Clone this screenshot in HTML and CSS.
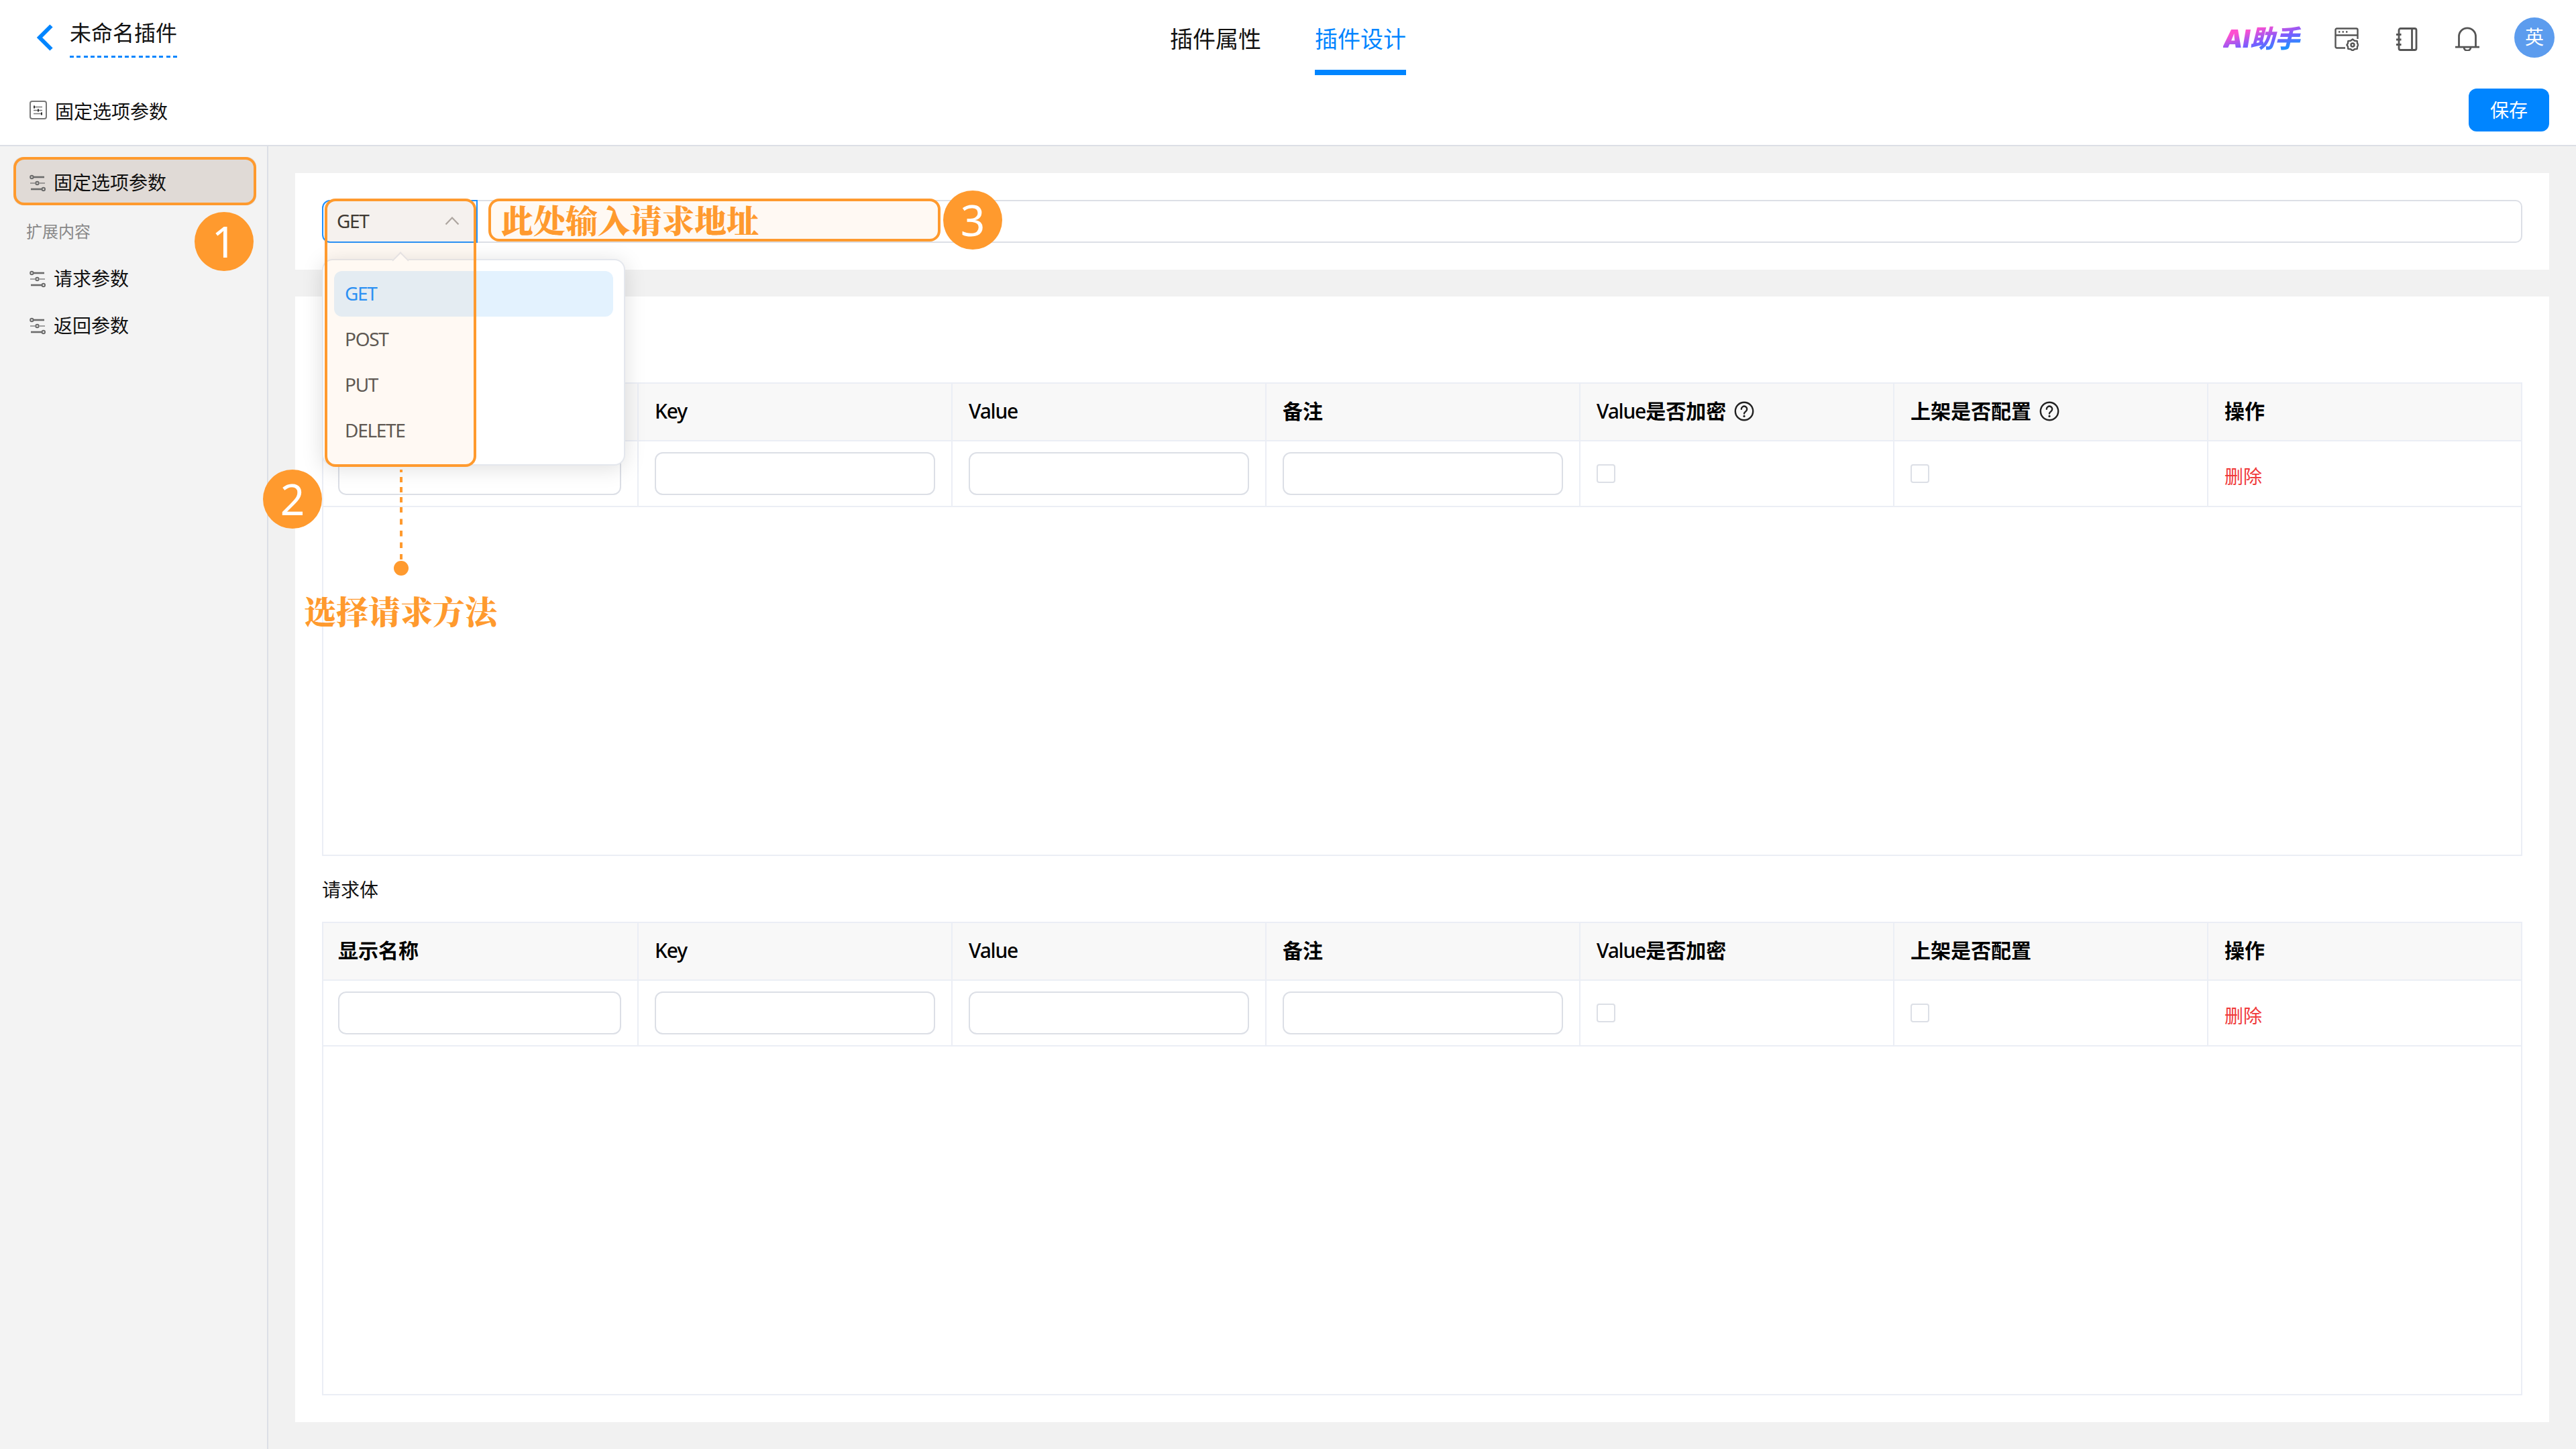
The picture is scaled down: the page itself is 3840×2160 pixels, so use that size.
FILE: index.html
```
<!DOCTYPE html>
<html lang="zh-CN">
<head>
  <meta charset="UTF-8">
  <title>插件设计</title>
  <link rel="stylesheet" href="styles.css">
</head>
<body>
  <svg class="symbols">
    <symbol id="icon-params" viewBox="0 0 24 26">
      <g fill="none" stroke="currentColor" stroke-width="2">
        <path d="M6 4H22" stroke-width="2.600"/>
        <path d="M1 13H8M15 13H23" opacity=".6"/>
        <path d="M2 22H18" stroke-width="2.600"/>
        <circle cx="3.400" cy="4" r="2.200"/>
        <circle cx="11.500" cy="13" r="2.200"/>
        <circle cx="20.800" cy="22" r="2.200"/>
      </g>
    </symbol>
    <symbol id="icon-help" viewBox="0 0 30 30">
      <g fill="none" stroke="currentColor" stroke-width="2.4" stroke-linecap="round">
        <circle cx="15" cy="15" r="13.2"/>
        <path d="M10.8 11.8a4.2 4.2 0 1 1 6.4 3.6c-1.6 1-2.2 1.6-2.2 3.2"/>
      </g>
      <circle cx="15" cy="22.4" r="1.6" fill="currentColor"/>
    </symbol>
  </svg>

  <header class="header">
    <div class="top-bar">
      <div class="title-area">
        <svg class="back" viewBox="0 0 24 40"><path d="M21.5 2.5L4 20L21.5 37.5" fill="none" stroke="#0085ff" stroke-width="6"/></svg>
        <span class="plugin-name">未命名插件</span>
      </div>
      <nav class="tabs">
        <a class="tab">插件属性</a>
        <a class="tab active">插件设计</a>
      </nav>
      <div class="tools">
        <span class="ai">AI助手</span>
        <svg class="tool-icon" viewBox="0 0 36 36" fill="none" stroke="#555" stroke-width="2.4">
          <path d="M16 31.500H3.500a2 2 0 0 1-2-2V4.500a2 2 0 0 1 2-2H32.500a2 2 0 0 1 2 2V18M1.500 12.500H34.500"/>
          <path d="M6 7.500h2.400M11.500 7.500h2.400M17 7.500h2.400"/>
          <path d="M27 18.500l3 2.200 3.700.4.400 3.700L35.600 27l-1.500 2.200-.4 3.700-3.700.4-3 2.200-3-2.200-3.700-.4-.4-3.700L18.400 27l1.500-2.200.4-3.700 3.700-.4z" stroke-linejoin="round"/>
          <circle cx="27" cy="27" r="2.500"/>
        </svg>
        <svg class="tool-icon" viewBox="0 0 36 36" fill="none" stroke="#555" stroke-width="2.800">
          <rect x="6" y="2.500" width="26" height="32" rx="2.500"/>
          <path d="M25.500 2.500V34.500M2 11.500H9.500M2 19H9.500M2 26.500H9.500"/>
        </svg>
        <svg class="tool-icon" viewBox="0 0 36 36" fill="none" stroke="#555" stroke-width="2.800">
          <path d="M5.500 30V14.300a12.500 12.500 0 0 1 25 0V30M0 30.200H36M13 30.500a5 5 0 0 0 10 0"/>
        </svg>
        <span class="avatar">英</span>
      </div>
    </div>
    <div class="sub-bar">
      <svg class="sub-icon" viewBox="0 0 26 28" fill="none" stroke="#777" stroke-width="2">
        <rect x="1" y="1" width="24" height="26" rx="3"/>
        <path d="M6 9.500H19M6 14.500H19M6 19.500H19" stroke-width="1.500"/>
        <path d="M7 7.500v4M13 12.500v4M18 17.500v4" stroke="#333"/>
      </svg>
      <span class="sub-name">固定选项参数</span>
      <button class="save">保存</button>
    </div>
  </header>

  <div class="body">
    <aside class="sidebar">
      <div class="menu-item active"><svg><use href="#icon-params"/></svg>固定选项参数</div>
      <div class="menu-title">扩展内容</div>
      <div class="menu-item"><svg><use href="#icon-params"/></svg>请求参数</div>
      <div class="menu-item"><svg><use href="#icon-params"/></svg>返回参数</div>
    </aside>

    <main class="main">
      <section class="panel request">
        <div class="select">
          <span class="latin">GET</span>
          <svg viewBox="0 0 22 14"><path d="M1.500 12.500L11 2.500L20.500 12.500" fill="none" stroke="#a8a6a6" stroke-width="2.200"/></svg>
        </div>
        <div class="url"></div>
      </section>

      <section class="panel params">
        <div class="table">
          <div class="row head">
            <div class="cell"></div>
            <div class="cell"><span class="latin">Key</span></div>
            <div class="cell"><span class="latin">Value</span></div>
            <div class="cell">备注</div>
            <div class="cell"><span class="latin">Value</span>是否加密<svg class="help"><use href="#icon-help"/></svg></div>
            <div class="cell">上架是否配置<svg class="help"><use href="#icon-help"/></svg></div>
            <div class="cell">操作</div>
          </div>
          <div class="row">
            <div class="cell"><div class="field"></div></div>
            <div class="cell"><div class="field"></div></div>
            <div class="cell"><div class="field"></div></div>
            <div class="cell"><div class="field"></div></div>
            <div class="cell"><i class="check"></i></div>
            <div class="cell"><i class="check"></i></div>
            <div class="cell"><a class="delete">删除</a></div>
          </div>
        </div>

        <h3 class="section-title">请求体</h3>

        <div class="table">
          <div class="row head">
            <div class="cell">显示名称</div>
            <div class="cell"><span class="latin">Key</span></div>
            <div class="cell"><span class="latin">Value</span></div>
            <div class="cell">备注</div>
            <div class="cell"><span class="latin">Value</span>是否加密</div>
            <div class="cell">上架是否配置</div>
            <div class="cell">操作</div>
          </div>
          <div class="row">
            <div class="cell"><div class="field"></div></div>
            <div class="cell"><div class="field"></div></div>
            <div class="cell"><div class="field"></div></div>
            <div class="cell"><div class="field"></div></div>
            <div class="cell"><i class="check"></i></div>
            <div class="cell"><i class="check"></i></div>
            <div class="cell"><a class="delete">删除</a></div>
          </div>
        </div>
      </section>
    </main>
  </div>

  <!-- 请求方法下拉 -->
  <ul class="dropdown">
    <li class="selected">GET</li>
    <li>POST</li>
    <li>PUT</li>
    <li>DELETE</li>
  </ul>

  <!-- 操作步骤标注 -->
  <div class="mark mark-menu"></div>
  <div class="mark mark-method"></div>
  <div class="mark mark-url">此处输入请求地址</div>
  <span class="step step-1">1</span>
  <span class="step step-2">2</span>
  <span class="step step-3">3</span>
  <svg class="leader" viewBox="0 0 24 160" stroke="#ff9a2e" stroke-width="4">
    <path d="M12 0V4"/>
    <path d="M12 11V65" stroke-dasharray="8 7"/>
    <path d="M12 73.500V134" stroke-dasharray="8.500 9"/>
    <circle cx="12" cy="147" r="11" fill="#ff9a2e" stroke="none"/>
  </svg>
  <div class="note">选择请求方法</div>
</body>
</html>
```
FILE: styles.css
```
* {
  box-sizing: border-box;
}

body {
  margin: 0;
  width: 3840px;
  height: 2160px;
  position: relative;
  overflow: hidden;
  display: flex;
  flex-direction: column;
  background: #f1f1f1;
  color: #111;
  font-family: "Noto Sans", "Noto Sans CJK SC", sans-serif;
  font-size: 28px;
  line-height: 1;
}

.symbols {
  display: none;
}

.latin {
  letter-spacing: -1.4px;
}

/* 顶部 */
.header {
  height: 218px;
  background: #fff;
  border-bottom: 2px solid #dcdfe6;
}

.top-bar {
  height: 116px;
  display: grid;
  grid-template-columns: 1fr auto 1fr;
}

.title-area {
  display: flex;
  align-items: flex-start;
  padding-left: 55px;
}

.back {
  width: 24px;
  height: 40px;
  margin: 36px 25px 0 0;
}

.plugin-name {
  height: 64px;
  margin-top: 22px;
  font-size: 32px;
  line-height: 53px;
  background: repeating-linear-gradient(90deg, #0085ff 0 6px, transparent 6px 10.267px) left bottom / 100% 3px no-repeat;
}

.tabs {
  display: flex;
  gap: 80px;
  height: 112px;
}

.tab {
  font-size: 34px;
  line-height: 116px;
  height: 112px;
}

.tab.active {
  color: #0085ff;
  border-bottom: 8px solid #0085ff;
}

.tools {
  display: flex;
  justify-content: flex-end;
  align-items: center;
  padding-right: 32px;
  height: 116px;
}

.ai {
  margin-right: 48px;
  padding-right: 4px;
  font-family: Inter, "Noto Sans CJK SC", sans-serif;
  font-size: 37px;
  font-weight: 900;
  font-style: italic;
  line-height: 44px;
  background: linear-gradient(165deg, #ff4fd0 25%, #7a5cff 55%, #1e90ff 80%);
  -webkit-background-clip: text;
  color: transparent;
}

.tool-icon {
  width: 36px;
  height: 36px;
  margin-right: 54px;
}

.tool-icon:nth-of-type(3) {
  margin-right: 52px;
}

.avatar {
  width: 60px;
  height: 60px;
  margin-top: -4px;
  border-radius: 50%;
  background: #5c9cee;
  color: #fff;
  line-height: 58px;
  text-align: center;
}

.sub-bar {
  height: 100px;
  display: flex;
  align-items: center;
  padding: 0 40px 4px 44px;
}

.sub-icon {
  width: 26px;
  height: 28px;
  margin-right: 12px;
}

.sub-name {
  padding-top: 3px;
}

.save {
  margin-left: auto;
  width: 120px;
  height: 64px;
  border: none;
  border-radius: 12px;
  background: #0085ff;
  color: #fff;
  font: inherit;
}

/* 左侧菜单 */
.body {
  flex: 1;
  display: flex;
}

.sidebar {
  width: 400px;
  padding-top: 16px;
  background: #f3f3f3;
  border-right: 2px solid #dcdfe6;
}

.menu-item {
  height: 70px;
  margin: 0 18px 0 20px;
  padding-left: 24px;
  display: flex;
  align-items: center;
}

.menu-item svg {
  width: 24px;
  height: 26px;
  margin: 2px 12px 0 0;
  color: #6b6b6b;
}

.menu-item.active {
  height: 72px;
  margin-right: 16px;
  padding-top: 3px;
  border-radius: 14px;
  background: #e0dad6;
}

.menu-title {
  padding-left: 39px;
  font-size: 24px;
  height: 74px;
  line-height: 77px;
  color: #888;
}

/* 内容区 */
.main {
  flex: 1;
  display: flex;
  flex-direction: column;
  gap: 40px;
  padding: 40px;
}

.panel {
  background: #fff;
  padding: 40px;
}

.request {
  height: 144px;
  display: flex;
}

.select {
  width: 232px;
  height: 64px;
  padding: 0 25px 2px 20px;
  border: 2px solid #1e90ff;
  border-radius: 12px 0 0 12px;
  background: #f5f7fa;
  color: #333;
  display: flex;
  align-items: center;
  justify-content: space-between;
}

.select svg {
  width: 22px;
  height: 14px;
}

.url {
  flex: 1;
  border: 2px solid #dcdfe6;
  border-left: none;
  border-radius: 0 10px 10px 0;
}

.params {
  height: 1678px;
  padding-top: 128px;
}

.table {
  height: 706px;
  border: 2px solid #ebeef5;
}

.row {
  display: grid;
  grid-template-columns: 470px repeat(5, 468px) 466px;
  height: 98px;
  border-bottom: 2px solid #ebeef5;
}

.cell {
  display: flex;
  align-items: center;
  padding: 0 24px;
  border-right: 2px solid #ebeef5;
}

.cell:first-child {
  padding-left: 22px;
}

.cell:last-child {
  border-right: none;
}

.head {
  height: 86px;
  background: #f8f8f8;
  color: #000;
  font-size: 30px;
  font-weight: 600;
}

.head .cell {
  padding-bottom: 2px;
}

.head .latin {
  font-weight: 500;
  letter-spacing: -1.2px;
}

.help {
  width: 30px;
  height: 30px;
  margin-left: 12px;
  color: #222;
}

.field {
  flex: 1;
  height: 64px;
  border: 2px solid #dcdfe6;
  border-radius: 12px;
}

.check {
  width: 28px;
  height: 28px;
  border: 2px solid #dcdfe6;
  border-radius: 4px;
}

.delete {
  color: #f03a3a;
  padding-top: 7px;
}

.section-title {
  height: 98px;
  margin: 0;
  font-size: 28px;
  font-weight: 400;
  line-height: 100px;
}

/* 下拉菜单 */
.dropdown {
  position: absolute;
  left: 480px;
  top: 386px;
  width: 452px;
  margin: 0;
  padding: 16px;
  list-style: none;
  background: #fff;
  border: 2px solid #e4e7ed;
  border-radius: 16px;
  box-shadow: 0 4px 32px rgba(0, 0, 0, 0.13);
  color: #555;
}

.dropdown::before {
  content: "";
  position: absolute;
  left: 106px;
  top: -9px;
  width: 16px;
  height: 16px;
  background: #fff;
  border: 2px solid #e4e7ed;
  border-right: none;
  border-bottom: none;
  transform: rotate(45deg);
}

.dropdown li {
  height: 68px;
  padding-left: 16px;
  border-radius: 12px;
  line-height: 66px;
  letter-spacing: -1.3px;
}

.dropdown .selected {
  background: #e3f2fe;
  color: #1e90ff;
}

/* 标注 */
.mark {
  position: absolute;
  border: 4px solid #ff9a2e;
  border-radius: 16px;
  background: rgba(255, 154, 46, 0.06);
}

.mark-menu {
  left: 20px;
  top: 234px;
  width: 362px;
  height: 72px;
  background: none;
}

.mark-method {
  left: 484px;
  top: 296px;
  width: 226px;
  height: 400px;
}

.mark-url {
  left: 728px;
  top: 296px;
  width: 674px;
  height: 64px;
  padding-left: 15px;
  line-height: 54px;
}

.mark-url,
.note {
  font-family: "Noto Serif CJK SC", "Source Han Serif SC", "Noto Sans CJK SC", serif;
  font-size: 48px;
  font-weight: 900;
  color: #ff9a2e;
  white-space: nowrap;
}

.note {
  position: absolute;
  left: 453px;
  top: 885px;
  line-height: 50px;
}

.step {
  position: absolute;
  width: 88px;
  height: 88px;
  border-radius: 50%;
  background: #ff9a2e;
  color: #fff;
  font-size: 64px;
  line-height: 88px;
  text-align: center;
}

.step-1 {
  left: 290px;
  top: 316px;
}

.step-2 {
  left: 392px;
  top: 700px;
}

.step-3 {
  left: 1406px;
  top: 284px;
}

.leader {
  position: absolute;
  left: 586px;
  top: 700px;
  width: 24px;
  height: 160px;
}
```
